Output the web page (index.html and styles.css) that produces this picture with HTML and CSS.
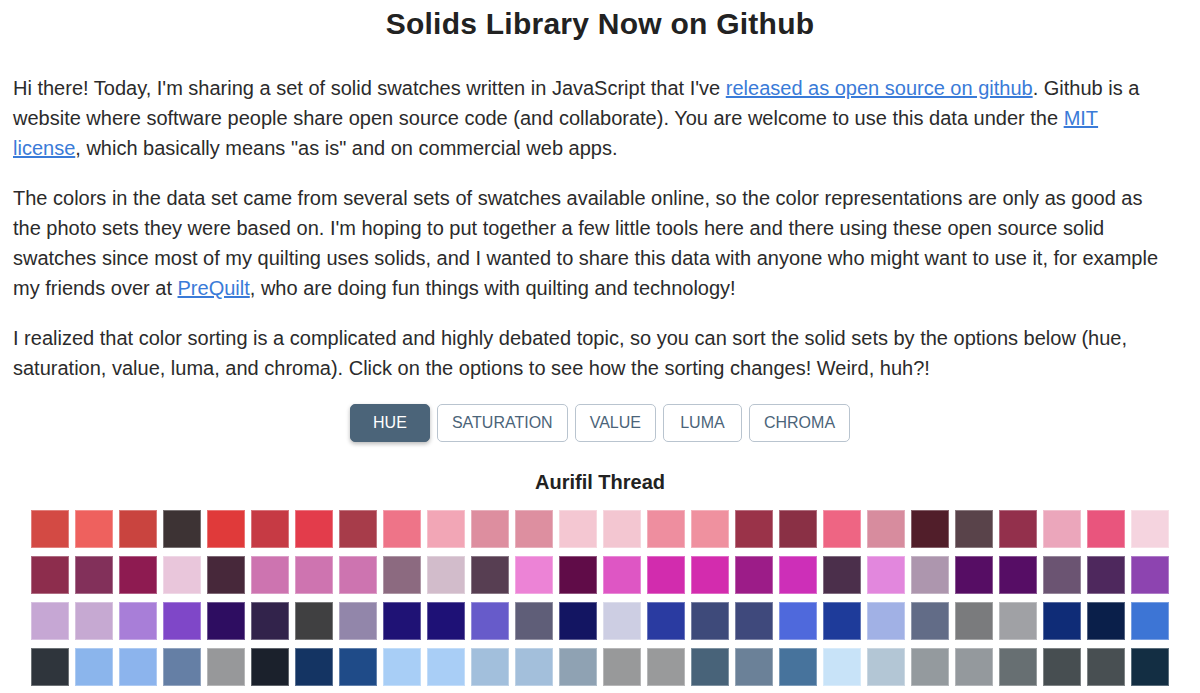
FILE: index.html
```html
<!DOCTYPE html>
<html lang="en">
<head>
<meta charset="utf-8">
<title>Solids Library Now on Github</title>
<link rel="stylesheet" href="styles.css">
</head>
<body>
<main class="page">
  <h1 class="title">Solids Library Now on Github</h1>
  <p class="text">Hi there! Today, I'm sharing a set of solid swatches written in JavaScript that I've <a href="#">released as open source on github</a>. Github is a<br>website where software people share open source code (and collaborate). You are welcome to use this data under the <a href="#">MIT<br>license</a>, which basically means "as is" and on commercial web apps.</p>
  <p class="text">The colors in the data set came from several sets of swatches available online, so the color representations are only as good as<br>the photo sets they were based on. I'm hoping to put together a few little tools here and there using these open source solid<br>swatches since most of my quilting uses solids, and I wanted to share this data with anyone who might want to use it, for example<br>my friends over at <a href="#">PreQuilt</a>, who are doing fun things with quilting and technology!</p>
  <p class="text">I realized that color sorting is a complicated and highly debated topic, so you can sort the solid sets by the options below (hue,<br>saturation, value, luma, and chroma). Click on the options to see how the sorting changes! Weird, huh?!</p>

  <div class="sort-bar">
    <button class="sort-btn active">HUE</button>
    <button class="sort-btn">SATURATION</button>
    <button class="sort-btn">VALUE</button>
    <button class="sort-btn">LUMA</button>
    <button class="sort-btn">CHROMA</button>
  </div>

  <h2 class="set-title">Aurifil Thread</h2>
  <div class="swatches">
    <div class="sw" style="background:#d34a44"></div><div class="sw" style="background:#ee615e"></div><div class="sw" style="background:#c9443f"></div><div class="sw" style="background:#3d3334"></div><div class="sw" style="background:#e03a3a"></div><div class="sw" style="background:#c63a44"></div><div class="sw" style="background:#e33c4b"></div><div class="sw" style="background:#a73c4a"></div><div class="sw" style="background:#ee7488"></div><div class="sw" style="background:#f2a6b6"></div><div class="sw" style="background:#dd8e9f"></div><div class="sw" style="background:#dd8fa0"></div><div class="sw" style="background:#f4c7d2"></div><div class="sw" style="background:#f3c6d1"></div><div class="sw" style="background:#ee8e9f"></div><div class="sw" style="background:#ef919f"></div><div class="sw" style="background:#9a3349"></div><div class="sw" style="background:#8a3045"></div><div class="sw" style="background:#ee6583"></div><div class="sw" style="background:#d78c9e"></div><div class="sw" style="background:#511e2a"></div><div class="sw" style="background:#59434a"></div><div class="sw" style="background:#93304c"></div><div class="sw" style="background:#eba6bb"></div><div class="sw" style="background:#e9557d"></div><div class="sw" style="background:#f5d4df"></div>
    <div class="sw" style="background:#8d2d4d"></div><div class="sw" style="background:#82305a"></div><div class="sw" style="background:#8e1b51"></div><div class="sw" style="background:#e9c6db"></div><div class="sw" style="background:#47283a"></div><div class="sw" style="background:#cd74b0"></div><div class="sw" style="background:#ce74b0"></div><div class="sw" style="background:#cd74b0"></div><div class="sw" style="background:#8c6a80"></div><div class="sw" style="background:#d2bccb"></div><div class="sw" style="background:#573e52"></div><div class="sw" style="background:#ec83d6"></div><div class="sw" style="background:#600c48"></div><div class="sw" style="background:#de56c4"></div><div class="sw" style="background:#d22cae"></div><div class="sw" style="background:#d32cae"></div><div class="sw" style="background:#9c1c88"></div><div class="sw" style="background:#cd2fb8"></div><div class="sw" style="background:#4b2f4b"></div><div class="sw" style="background:#e287dd"></div><div class="sw" style="background:#ad96ae"></div><div class="sw" style="background:#560d64"></div><div class="sw" style="background:#560d65"></div><div class="sw" style="background:#6b5472"></div><div class="sw" style="background:#4e285d"></div><div class="sw" style="background:#8d44b0"></div>
    <div class="sw" style="background:#c6a7d4"></div><div class="sw" style="background:#c6a9d2"></div><div class="sw" style="background:#a87ed8"></div><div class="sw" style="background:#7f47c8"></div><div class="sw" style="background:#2e0d61"></div><div class="sw" style="background:#32234b"></div><div class="sw" style="background:#404041"></div><div class="sw" style="background:#9286aa"></div><div class="sw" style="background:#1f1275"></div><div class="sw" style="background:#1e1176"></div><div class="sw" style="background:#675bca"></div><div class="sw" style="background:#5f5e78"></div><div class="sw" style="background:#131562"></div><div class="sw" style="background:#cdcee3"></div><div class="sw" style="background:#2a3ba1"></div><div class="sw" style="background:#3e4a7a"></div><div class="sw" style="background:#3f497c"></div><div class="sw" style="background:#4f69dc"></div><div class="sw" style="background:#1e3b9a"></div><div class="sw" style="background:#a1b1e5"></div><div class="sw" style="background:#626c87"></div><div class="sw" style="background:#7a7b7d"></div><div class="sw" style="background:#a0a1a5"></div><div class="sw" style="background:#0f2c77"></div><div class="sw" style="background:#0a1f4a"></div><div class="sw" style="background:#3d75d5"></div>
    <div class="sw" style="background:#2f353c"></div><div class="sw" style="background:#8bb5ec"></div><div class="sw" style="background:#8cb4ed"></div><div class="sw" style="background:#657fa5"></div><div class="sw" style="background:#97989a"></div><div class="sw" style="background:#1b212c"></div><div class="sw" style="background:#143463"></div><div class="sw" style="background:#1f4b88"></div><div class="sw" style="background:#a8cef6"></div><div class="sw" style="background:#a9cef6"></div><div class="sw" style="background:#a2bfdc"></div><div class="sw" style="background:#a3bfdb"></div><div class="sw" style="background:#8fa2b3"></div><div class="sw" style="background:#98999a"></div><div class="sw" style="background:#999a9b"></div><div class="sw" style="background:#486379"></div><div class="sw" style="background:#6b8198"></div><div class="sw" style="background:#47739c"></div><div class="sw" style="background:#c8e3f8"></div><div class="sw" style="background:#b3c6d5"></div><div class="sw" style="background:#949a9e"></div><div class="sw" style="background:#94999d"></div><div class="sw" style="background:#676f72"></div><div class="sw" style="background:#474e51"></div><div class="sw" style="background:#484f52"></div><div class="sw" style="background:#132e43"></div>
  </div>
</main>
</body>
</html>
```

FILE: styles.css
```css
html, body {
  margin: 0;
  padding: 0;
  background: #ffffff;
}

body {
  font-family: "Liberation Sans", Arial, Helvetica, sans-serif;
  color: #2b2b2b;
}

.page {
  padding: 0 13px;
}

.title {
  margin: 6px 0 31px;
  font-size: 30px;
  line-height: 36px;
  font-weight: 700;
  letter-spacing: 0.25px;
  text-align: center;
  color: #222222;
}

.text {
  margin: 0 0 20px;
  font-size: 20px;
  line-height: 30px;
  white-space: nowrap;
}

.text a {
  color: #3a7bd8;
  text-decoration: underline;
}

.sort-bar {
  display: flex;
  justify-content: center;
  gap: 7px;
  margin-top: 21px;
}

.sort-btn {
  height: 38px;
  min-width: 79px;
  padding: 0 14px;
  box-sizing: border-box;
  border: 1px solid #b9c4cf;
  border-radius: 5px;
  background: #ffffff;
  color: #4b6479;
  font-family: "Liberation Sans", Arial, Helvetica, sans-serif;
  font-size: 16px;
  cursor: pointer;
}

.sort-btn.active {
  background: #4b6479;
  border-color: #4b6479;
  color: #ffffff;
  min-width: 80px;
  box-shadow: 0 2px 4px rgba(0, 0, 0, 0.28);
}

.set-title {
  margin: 28px 0 16px;
  font-size: 20px;
  line-height: 24px;
  font-weight: 700;
  text-align: center;
  color: #222222;
}

.swatches {
  display: grid;
  grid-template-columns: repeat(26, 38px);
  grid-auto-rows: 38px;
  column-gap: 6px;
  row-gap: 8px;
  justify-content: center;
}

.sw {
  box-sizing: border-box;
  border: 1px solid rgba(255, 255, 255, 0.3);
}
```
